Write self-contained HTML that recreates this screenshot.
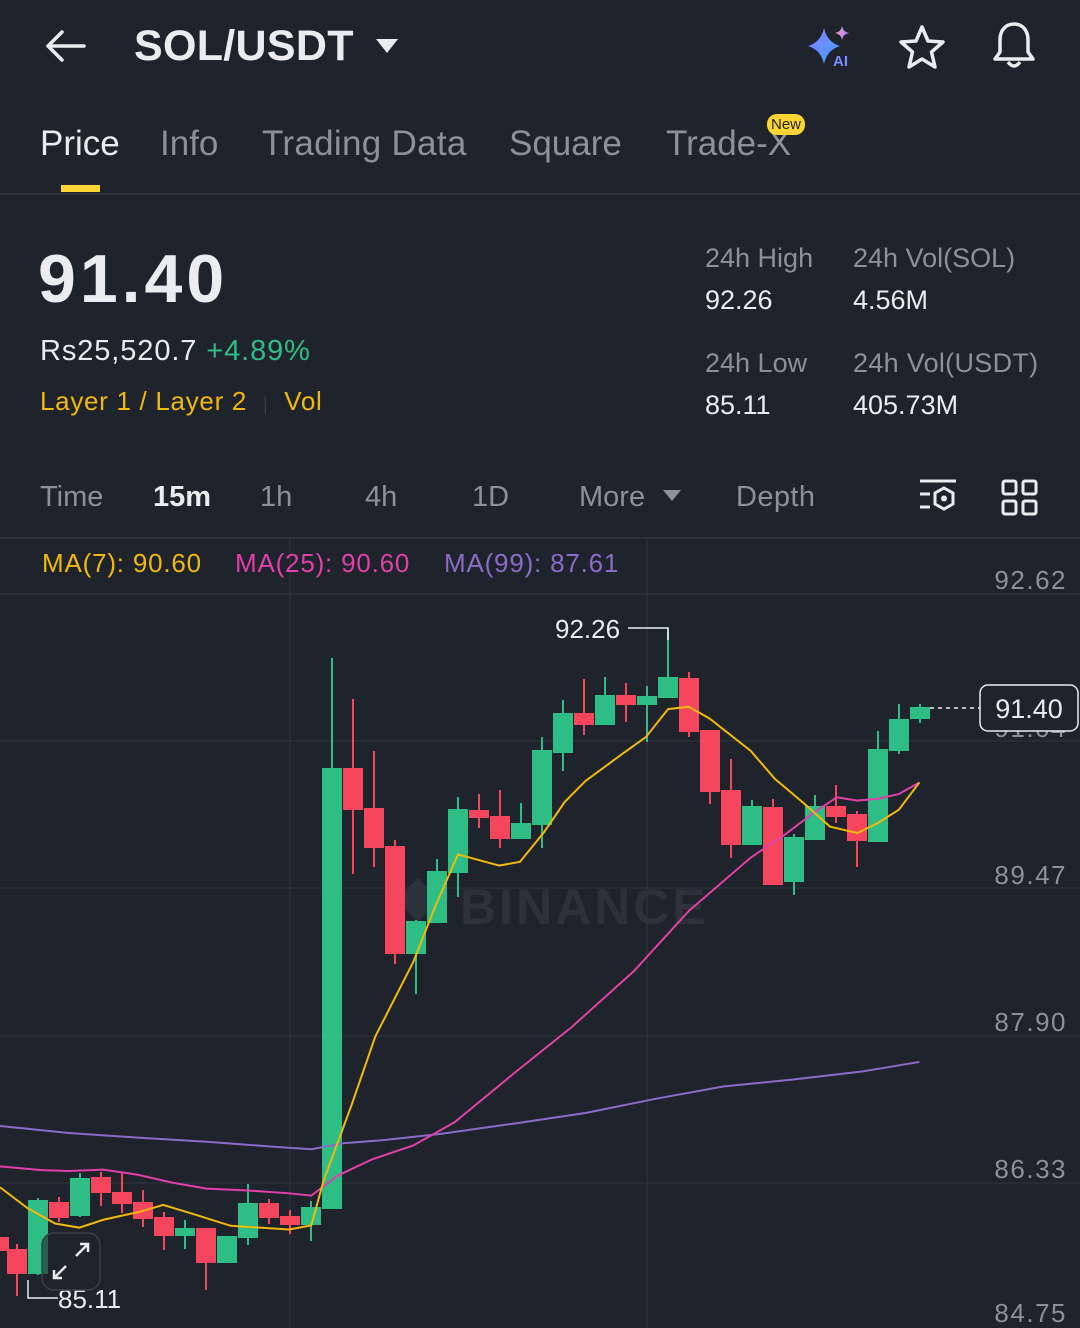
<!DOCTYPE html>
<html><head><meta charset="utf-8">
<style>
*{margin:0;padding:0;box-sizing:border-box}
body{width:1080px;height:1328px;background:#1f232b;font-family:"Liberation Sans",sans-serif;color:#eaecef;position:relative;overflow:hidden}
.a{position:absolute;white-space:nowrap}
.g{color:#8c9099}
</style></head><body>
<!-- header -->
<svg class="a" style="left:40px;top:26px" width="50" height="40" viewBox="0 0 50 40"><path d="M44 20H8M22 6L8 20L22 34" stroke="#eaecef" stroke-width="3.5" fill="none" stroke-linecap="round" stroke-linejoin="round"/></svg>
<div class="a" style="left:134px;top:22px;font-size:43px;font-weight:bold;letter-spacing:0.3px">SOL/USDT</div>
<svg class="a" style="left:374px;top:37px" width="26" height="18"><path d="M2 2H24L13 16Z" fill="#eaecef"/></svg>
<svg class="a" style="left:802px;top:24px" width="54" height="46" viewBox="0 0 54 46">
<defs><linearGradient id="ai" x1="0" y1="0" x2="1" y2="1"><stop offset="0" stop-color="#8a7dff"/><stop offset="1" stop-color="#3da0ff"/></linearGradient><linearGradient id="ai2"><stop offset="0" stop-color="#f0a0b0"/><stop offset="1" stop-color="#b080ff"/></linearGradient></defs>
<path d="M22 4Q25 18 38 22Q25 26 22 40Q19 26 6 22Q19 18 22 4Z" fill="url(#ai)"/>
<path d="M40 2Q41 8 47 9Q41 10 40 16Q39 10 33 9Q39 8 40 2Z" fill="url(#ai2)"/>
<text x="31" y="42" font-family="Liberation Sans" font-weight="bold" font-size="15" fill="#7a8cff">AI</text></svg>
<svg class="a" style="left:898px;top:24px" width="48" height="46" viewBox="0 0 48 46"><path d="M24 3L30 17L45 18L33.5 28L37 43L24 35L11 43L14.5 28L3 18L18 17Z" fill="none" stroke="#eaecef" stroke-width="3.5" stroke-linejoin="round"/></svg>
<svg class="a" style="left:990px;top:20px" width="48" height="52" viewBox="0 0 48 52"><path d="M24 4C15 4 10 11 10 20V32L5 39H43L38 32V20C38 11 33 4 24 4Z" fill="none" stroke="#eaecef" stroke-width="3.5" stroke-linejoin="round"/><path d="M18 42Q24 50 30 42" fill="none" stroke="#eaecef" stroke-width="3.5"/></svg>
<!-- tabs -->
<div class="a" style="left:40px;top:124px;font-size:35px">Price</div>
<div class="a g" style="left:160px;top:124px;font-size:35px">Info</div>
<div class="a g" style="left:262px;top:124px;font-size:35px;letter-spacing:0.3px">Trading Data</div>
<div class="a g" style="left:509px;top:124px;font-size:35px">Square</div>
<div class="a g" style="left:666px;top:124px;font-size:35px">Trade-X</div>
<div class="a" style="left:767px;top:114px;background:#fcd535;color:#1f232b;font-size:15px;padding:2px 4px;border-radius:10px">New</div>
<div class="a" style="left:61px;top:185px;width:39px;height:7px;background:#fcd535"></div>
<div class="a" style="left:0;top:193px;width:1080px;height:2px;background:#2b3039"></div>
<!-- price -->
<div class="a" style="left:38px;top:240px;font-size:68px;font-weight:bold;letter-spacing:4px">91.40</div>
<div class="a" style="left:40px;top:335px;font-size:29px;letter-spacing:0.9px">Rs25,520.7 <span style="color:#2ebd85">+4.89%</span></div>
<div class="a" style="left:40px;top:386px;font-size:26px;color:#f0b90b;letter-spacing:0.7px">Layer 1 / Layer 2 <span style="color:#3a3f48;font-size:18px;margin:0 8px">|</span> Vol</div>
<div class="a g" style="left:705px;top:243px;font-size:27px">24h High</div>
<div class="a" style="left:705px;top:285px;font-size:27px">92.26</div>
<div class="a g" style="left:853px;top:243px;font-size:27px">24h Vol(SOL)</div>
<div class="a" style="left:853px;top:285px;font-size:27px">4.56M</div>
<div class="a g" style="left:705px;top:348px;font-size:27px">24h Low</div>
<div class="a" style="left:705px;top:390px;font-size:27px">85.11</div>
<div class="a g" style="left:853px;top:348px;font-size:27px;letter-spacing:0.3px">24h Vol(USDT)</div>
<div class="a" style="left:853px;top:390px;font-size:27px">405.73M</div>
<!-- time row -->
<div class="a g" style="left:40px;top:481px;font-size:29px">Time</div>
<div class="a" style="left:153px;top:481px;font-size:29px;font-weight:bold">15m</div>
<div class="a g" style="left:260px;top:481px;font-size:29px">1h</div>
<div class="a g" style="left:365px;top:481px;font-size:29px">4h</div>
<div class="a g" style="left:472px;top:481px;font-size:29px">1D</div>
<div class="a g" style="left:579px;top:481px;font-size:29px">More</div>
<svg class="a" style="left:662px;top:489px" width="20" height="14"><path d="M1 1H19L10 12Z" fill="#8c9099"/></svg>
<div class="a g" style="left:736px;top:481px;font-size:29px;letter-spacing:0.4px">Depth</div>
<svg class="a" style="left:918px;top:478px" width="42" height="40" viewBox="0 0 42 40"><g stroke="#eaecef" stroke-width="3" fill="none"><path d="M2 3H38M2 16H12M2 29H12"/><path d="M26 10L35 15V26L26 31L17 26V15Z"/></g><circle cx="26" cy="20.5" r="3" fill="#eaecef"/></svg>
<svg class="a" style="left:1000px;top:478px" width="40" height="40" viewBox="0 0 40 40"><g stroke="#eaecef" stroke-width="3" fill="none"><rect x="3" y="3" width="13" height="13" rx="2"/><rect x="23" y="3" width="13" height="13" rx="2"/><rect x="3" y="23" width="13" height="13" rx="2"/><rect x="23" y="23" width="13" height="13" rx="2"/></g></svg>
<div class="a" style="left:0;top:537px;width:1080px;height:2px;background:#2b3039"></div>
<!-- chart -->
<svg class="a" style="left:0;top:0" width="1080" height="1328">
<g stroke="#2b3039" stroke-width="1.5">
<line x1="0" y1="594" x2="1080" y2="594"/><line x1="0" y1="741" x2="1080" y2="741"/><line x1="0" y1="888" x2="1080" y2="888"/><line x1="0" y1="1036" x2="1080" y2="1036"/><line x1="0" y1="1183" x2="1080" y2="1183"/>
<line x1="290" y1="539" x2="290" y2="1328"/><line x1="647" y1="539" x2="647" y2="1328"/></g>
<path d="M418 878L440 900L418 922L396 900Z" fill="#2c313a"/>
<text x="460" y="924" font-family="Liberation Sans" font-weight="bold" font-size="50" fill="#2c313a" letter-spacing="3">BINANCE</text>
<g stroke-width="2">
<g fill="#f6465d" stroke="#f6465d">
<rect x="-4" y="1238" width="12" height="12"/>
<line x1="17" y1="1244" x2="17" y2="1296"/><rect x="8" y="1250" width="18" height="23"/>
<line x1="59" y1="1197" x2="59" y2="1222"/><rect x="50" y="1203" width="18" height="14"/>
<line x1="101" y1="1172" x2="101" y2="1206"/><rect x="92" y="1178" width="18" height="14"/>
<line x1="122" y1="1173" x2="122" y2="1213"/><rect x="113" y="1193" width="18" height="10"/>
<line x1="143" y1="1190" x2="143" y2="1227"/><rect x="134" y="1203" width="18" height="15"/>
<line x1="164" y1="1212" x2="164" y2="1250"/><rect x="155" y="1218" width="18" height="17"/>
<line x1="206" y1="1229" x2="206" y2="1290"/><rect x="197" y="1229" width="18" height="33"/>
<line x1="269" y1="1199" x2="269" y2="1224"/><rect x="260" y="1204" width="18" height="13"/>
<line x1="290" y1="1210" x2="290" y2="1234"/><rect x="281" y="1217" width="18" height="7"/>
<line x1="353" y1="699" x2="353" y2="874"/><rect x="344" y="769" width="18" height="40"/>
<line x1="374" y1="751" x2="374" y2="867"/><rect x="365" y="809" width="18" height="38"/>
<line x1="395" y1="840" x2="395" y2="964"/><rect x="386" y="847" width="18" height="106"/>
<line x1="479" y1="794" x2="479" y2="828"/><rect x="470" y="811" width="18" height="6"/>
<line x1="500" y1="790" x2="500" y2="848"/><rect x="491" y="817" width="18" height="21"/>
<line x1="584" y1="679" x2="584" y2="735"/><rect x="575" y="714" width="18" height="10"/>
<line x1="626" y1="683" x2="626" y2="722"/><rect x="617" y="696" width="18" height="8"/>
<line x1="689" y1="672" x2="689" y2="737"/><rect x="680" y="679" width="18" height="52"/>
<line x1="710" y1="731" x2="710" y2="804"/><rect x="701" y="731" width="18" height="60"/>
<line x1="731" y1="759" x2="731" y2="858"/><rect x="722" y="791" width="18" height="53"/>
<line x1="773" y1="799" x2="773" y2="884"/><rect x="764" y="808" width="18" height="76"/>
<line x1="836" y1="785" x2="836" y2="823"/><rect x="827" y="807" width="18" height="9"/>
<line x1="857" y1="811" x2="857" y2="867"/><rect x="848" y="815" width="18" height="25"/>
</g>
<g fill="#2ebd85" stroke="#2ebd85">
<line x1="38" y1="1198" x2="38" y2="1275"/><rect x="29" y="1201" width="18" height="72"/>
<line x1="80" y1="1173" x2="80" y2="1217"/><rect x="71" y="1179" width="18" height="36"/>
<line x1="185" y1="1220" x2="185" y2="1249"/><rect x="176" y="1229" width="18" height="6"/>
<line x1="227" y1="1237" x2="227" y2="1262"/><rect x="218" y="1237" width="18" height="25"/>
<line x1="248" y1="1184" x2="248" y2="1245"/><rect x="239" y="1204" width="18" height="33"/>
<line x1="311" y1="1201" x2="311" y2="1241"/><rect x="302" y="1208" width="18" height="16"/>
<line x1="332" y1="658" x2="332" y2="1208"/><rect x="323" y="769" width="18" height="439"/>
<line x1="416" y1="920" x2="416" y2="994"/><rect x="407" y="922" width="18" height="31"/>
<line x1="437" y1="859" x2="437" y2="922"/><rect x="428" y="872" width="18" height="50"/>
<line x1="458" y1="797" x2="458" y2="897"/><rect x="449" y="810" width="18" height="62"/>
<line x1="521" y1="803" x2="521" y2="838"/><rect x="512" y="824" width="18" height="14"/>
<line x1="542" y1="737" x2="542" y2="848"/><rect x="533" y="751" width="18" height="73"/>
<line x1="563" y1="700" x2="563" y2="771"/><rect x="554" y="714" width="18" height="38"/>
<line x1="605" y1="677" x2="605" y2="724"/><rect x="596" y="696" width="18" height="28"/>
<line x1="647" y1="686" x2="647" y2="742"/><rect x="638" y="697" width="18" height="7"/>
<line x1="668" y1="628" x2="668" y2="697"/><rect x="659" y="678" width="18" height="19"/>
<line x1="752" y1="800" x2="752" y2="844"/><rect x="743" y="807" width="18" height="37"/>
<line x1="794" y1="834" x2="794" y2="895"/><rect x="785" y="838" width="18" height="43"/>
<line x1="815" y1="795" x2="815" y2="839"/><rect x="806" y="807" width="18" height="32"/>
<line x1="878" y1="731" x2="878" y2="841"/><rect x="869" y="750" width="18" height="91"/>
<line x1="899" y1="704" x2="899" y2="754"/><rect x="890" y="720" width="18" height="30"/>
<line x1="920" y1="704" x2="920" y2="723"/><rect x="911" y="708" width="18" height="10"/>
</g></g>
<g fill="none" stroke-width="2" transform="translate(0,600) scale(0.6887,0.46425)">
<polyline vector-effect="non-scaling-stroke" stroke="#8a6cc8" points="0,1133 100,1148 200,1158 300,1167 400,1178 452,1183 500,1170 560,1163 640,1150 750,1127 850,1105 950,1075 1050,1048 1150,1033 1250,1016 1335,995"/>
<polyline vector-effect="non-scaling-stroke" stroke="#e040a8" points="0,1220 60,1228 100,1230 150,1227 200,1238 250,1255 300,1268 360,1272 420,1278 452,1283 490,1240 540,1205 600,1175 660,1125 750,1015 830,920 920,800 1000,670 1090,555 1140,505 1180,460 1215,425 1245,432 1275,428 1305,418 1335,393"/>
<polyline vector-effect="non-scaling-stroke" stroke="#f0b90b" points="0,1265 40,1310 80,1343 115,1352 150,1335 205,1317 237,1303 275,1320 335,1348 420,1356 452,1347 470,1250 510,1090 545,940 600,780 632,660 665,548 725,572 755,564 790,500 820,435 850,390 905,330 938,295 970,235 1000,230 1030,255 1090,325 1125,385 1165,435 1205,488 1245,502 1275,480 1305,452 1335,393"/>
</g>
<polyline points="628,628 668,628 668,640" fill="none" stroke="#eaecef" stroke-width="1.5"/>
<polyline points="28,1280 28,1298 58,1298" fill="none" stroke="#eaecef" stroke-width="1.5"/>
<line x1="930" y1="708" x2="980" y2="708" stroke="#eaecef" stroke-width="1.5" stroke-dasharray="4,4"/>
<g font-family="Liberation Sans" font-size="26" fill="#8c9099" text-anchor="end" letter-spacing="1.5">
<text x="1067" y="589">92.62</text><text x="1067" y="884">89.47</text><text x="1067" y="1031">87.90</text><text x="1067" y="1178">86.33</text><text x="1067" y="1322">84.75</text><text x="1067" y="737">91.04</text></g>
<rect x="980" y="685" width="98" height="46" rx="8" fill="#1f232b" stroke="#eaecef" stroke-width="1.5"/>
<text x="1029" y="718" font-family="Liberation Sans" font-size="27" fill="#eaecef" text-anchor="middle">91.40</text>
<text x="555" y="638" font-family="Liberation Sans" font-size="26" fill="#eaecef">92.26</text>
<text x="58" y="1308" font-family="Liberation Sans" font-size="26" fill="#eaecef">85.11</text>
<rect x="42" y="1233" width="58" height="57" rx="12" fill="rgba(31,35,43,0.6)" stroke="#3a3f48" stroke-width="1.5"/>
<path d="M76 1256L88 1244M80 1244H88V1252M66 1266L54 1278M54 1270V1278H62" fill="none" stroke="#eaecef" stroke-width="2.5"/>
</svg>
<div class="a" style="left:42px;top:548px;font-size:26px;color:#f0b90b;letter-spacing:0.8px">MA(7): 90.60</div>
<div class="a" style="left:235px;top:548px;font-size:26px;color:#e040a8;letter-spacing:0.8px">MA(25): 90.60</div>
<div class="a" style="left:444px;top:548px;font-size:26px;color:#8a6cc8;letter-spacing:0.8px">MA(99): 87.61</div>
</body></html>
